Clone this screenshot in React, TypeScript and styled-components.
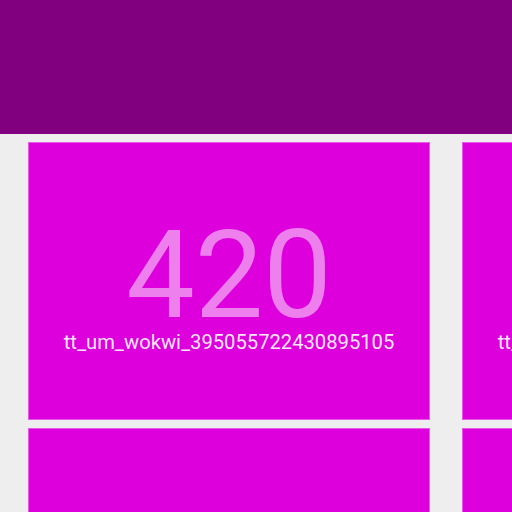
import React from "react";
import styled, { createGlobalStyle } from "styled-components";

const Global = createGlobalStyle`
  html, body {
    margin: 0;
    padding: 0;
    background: #eeeeee;
    overflow: hidden;
    font-family: Roboto, "Liberation Sans", sans-serif;
  }
`;

const Page = styled.div`
  width: 512px;
  height: 512px;
  overflow: hidden;
  display: flex;
  flex-direction: column;
`;

const Header = styled.header`
  flex: 0 0 134px;
  background: #800080;
`;

const Grid = styled.main`
  display: grid;
  grid-template-columns: repeat(2, 402px);
  grid-auto-rows: 278px;
  column-gap: 32px;
  row-gap: 8px;
  padding: 8px 28px;
`;

const Tile = styled.div`
  box-sizing: border-box;
  background: #dd00dd;
  border: 1px solid rgba(255, 255, 255, 0.35);
  display: flex;
  flex-direction: column;
  align-items: center;
  justify-content: flex-start;
  padding-top: 76px;
  overflow: hidden;
`;

const Number = styled.div`
  font-size: 122px;
  line-height: 113px;
  color: rgba(255, 255, 255, 0.5);
  font-weight: 400;
`;

const Label = styled.div`
  font-size: 20.2px;
  line-height: 16px;
  margin-top: 2px;
  color: rgba(255, 255, 255, 0.92);
  white-space: nowrap;
`;

const tiles = [
  { n: 420, label: "tt_um_wokwi_395055722430895105" },
  { n: 421, label: "tt_um_wokwi_395055810210903041" },
  { n: 422, label: "tt_um_wokwi_395055938426034177" },
  { n: 423, label: "tt_um_wokwi_395056012345678913" },
];

export default function App() {
  return (
    <>
      <Global />
      <Page>
        <Header />
        <Grid>
          {tiles.map((t) => (
            <Tile key={t.n}>
              <Number>{t.n}</Number>
              <Label>{t.label}</Label>
            </Tile>
          ))}
        </Grid>
      </Page>
    </>
  );
}
